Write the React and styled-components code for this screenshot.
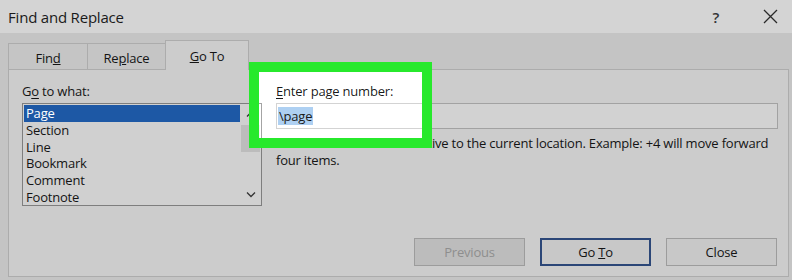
import styled, { createGlobalStyle } from 'styled-components'

const GlobalStyle = createGlobalStyle`
  html, body {
    margin: 0;
    padding: 0;
    background: #c4c4c4;
  }
  body {
    font-family: "Open Sans", "Noto Sans", sans-serif;
    color: #141414;
    letter-spacing: -0.2px;
  }
  * { box-sizing: border-box; }
`

const items = ['Page', 'Section', 'Line', 'Bookmark', 'Comment', 'Footnote']

const App = () => {
  return (
    <Window>
      <GlobalStyle />
      <TitleBar>
        <Title>Find and Replace</Title>
        <Controls>
          <Help>?</Help>
          <svg width='15' height='15' viewBox='0 0 15 15'>
            <path d='M1 1 L14 14 M14 1 L1 14' stroke='#2a2a2a' strokeWidth='1.3' fill='none' />
          </svg>
        </Controls>
      </TitleBar>
      <Body>
        <TabRow>
          <Tab $w={80}><span>Fin<u>d</u></span></Tab>
          <Tab $w={79}><span>Re<u>p</u>lace</span></Tab>
          <Tab $w={84} $active><span><u>G</u>o To</span></Tab>
        </TabRow>
        <Panel>
          <Columns>
            <LeftCol>
              <Label>G<u>o</u> to what:</Label>
              <ListBox>
                <Items>
                  {items.map((it, i) => (
                    <Item key={it} $selected={i === 0}>{it}</Item>
                  ))}
                </Items>
                <ScrollBar>
                  <ScrollButton>
                    <svg width='10' height='6' viewBox='0 0 10 6'>
                      <path d='M1 5.5 L5 1.5 L9 5.5' stroke='#333' strokeWidth='1.3' fill='none' />
                    </svg>
                  </ScrollButton>
                  <Thumb />
                  <Track />
                  <ScrollButton>
                    <svg width='10' height='6' viewBox='0 0 10 6'>
                      <path d='M1 0.5 L5 4.5 L9 0.5' stroke='#333' strokeWidth='1.3' fill='none' />
                    </svg>
                  </ScrollButton>
                </ScrollBar>
              </ListBox>
            </LeftCol>
            <RightCol>
              <Label><u>E</u>nter page number:</Label>
              <Field>
                <Selected>\page</Selected>
              </Field>
              <Hint>
                Enter + and - to move relative to the current location. Example: +4 will move forward
                four items.
              </Hint>
            </RightCol>
          </Columns>
          <ButtonRow>
            <Button $disabled><span>Previous</span></Button>
            <Button $default><span>Go <u>T</u>o</span></Button>
            <Button><span>Close</span></Button>
          </ButtonRow>
        </Panel>
      </Body>
      <Highlight />
    </Window>
  )
}

export default App

const Window = styled.div`
  position: relative;
  width: 792px;
  height: 280px;
  overflow: hidden;
  background: #c4c4c4;
`

const TitleBar = styled.div`
  height: 33px;
  background: #d4d4d4;
  display: flex;
  align-items: center;
  justify-content: space-between;
  padding: 0 14px 0 8px;
`

const Title = styled.div`
  font-size: 15px;
  color: #1a1a1a;
`

const Controls = styled.div`
  display: flex;
  align-items: center;
  gap: 44px;
`

const Help = styled.span`
  font-size: 15px;
  font-weight: 600;
  color: #333;
`

const Body = styled.div`
  padding: 8px 3px 2px 8px;
`

const TabRow = styled.div`
  display: flex;
  align-items: flex-end;
  height: 29px;
  padding-left: 1px;
  position: relative;
  z-index: 1;
  margin-bottom: -1px;
`

const Tab = styled.div`
  width: ${p => p.$w}px;
  height: ${p => (p.$active ? 30 : 27)}px;
  margin-left: -1px;
  display: flex;
  align-items: center;
  justify-content: center;
  padding-top: ${p => (p.$active ? 0 : 2)}px;
  font-size: 13px;
  background: ${p => (p.$active ? '#cccccc' : '#c5c5c5')};
  border: 1px solid #acacac;
  border-bottom: ${p => (p.$active ? 'none' : '1px solid #acacac')};
`

const Panel = styled.div`
  height: 208px;
  background: #cccccc;
  border: 1px solid #acacac;
  display: flex;
  flex-direction: column;
  padding: 12px 10px 10px 13px;
`

const Columns = styled.div`
  display: flex;
  gap: 14px;
`

const LeftCol = styled.div`
  width: 240px;
`

const RightCol = styled.div`
  flex: 1;
`

const Label = styled.div`
  font-size: 13px;
  line-height: 18px;
  margin-bottom: 3px;
  u { text-underline-offset: 2px; }
`

const ListBox = styled.div`
  height: 103px;
  border: 1px solid #7e7e7e;
  background: #d0d0d0;
  display: flex;
`

const Items = styled.div`
  flex: 1;
  padding: 1px 0 0 1px;
`

const Item = styled.div`
  height: 16.8px;
  line-height: 16.8px;
  font-size: 13px;
  padding-left: 2px;
  background: ${p => (p.$selected ? '#1d58a5' : 'transparent')};
  color: ${p => (p.$selected ? '#ffffff' : '#141414')};
`

const ScrollBar = styled.div`
  width: 21px;
  display: flex;
  flex-direction: column;
`

const ScrollButton = styled.div`
  height: 20px;
  display: flex;
  align-items: center;
  justify-content: center;
`

const Thumb = styled.div`
  height: 27px;
  margin: 1px 1px 0;
  background: #bcbcbc;
`

const Track = styled.div`
  flex: 1;
`

const Field = styled.div`
  height: 26px;
  border: 1px solid #a2a2a2;
  background: #d2d2d2;
  font-size: 13px;
  display: flex;
  align-items: center;
  padding-left: 1px;
`

const Selected = styled.span`
  background: #86a0ba;
  line-height: 18px;
  padding: 0 1px;
`

const Hint = styled.div`
  font-size: 13px;
  line-height: 16.5px;
  margin-top: 6px;
`

const ButtonRow = styled.div`
  margin-top: auto;
  display: flex;
  justify-content: flex-end;
  gap: 15px;
  padding-right: 1px;
`

const Button = styled.div`
  width: 111px;
  height: 28px;
  display: flex;
  align-items: center;
  justify-content: center;
  font-size: 13px;
  background: ${p => (p.$disabled ? '#bcbcbc' : '#c8c8c8')};
  color: ${p => (p.$disabled ? '#8e8e8e' : '#141414')};
  border: ${p => (p.$default ? '2px solid #2b4677' : '1px solid #9c9c9c')};
`

const Highlight = styled.div`
  position: absolute;
  left: 249px;
  top: 62px;
  width: 183px;
  height: 86px;
  border: 10px solid #27e92c;
  backdrop-filter: brightness(1.3);
`
